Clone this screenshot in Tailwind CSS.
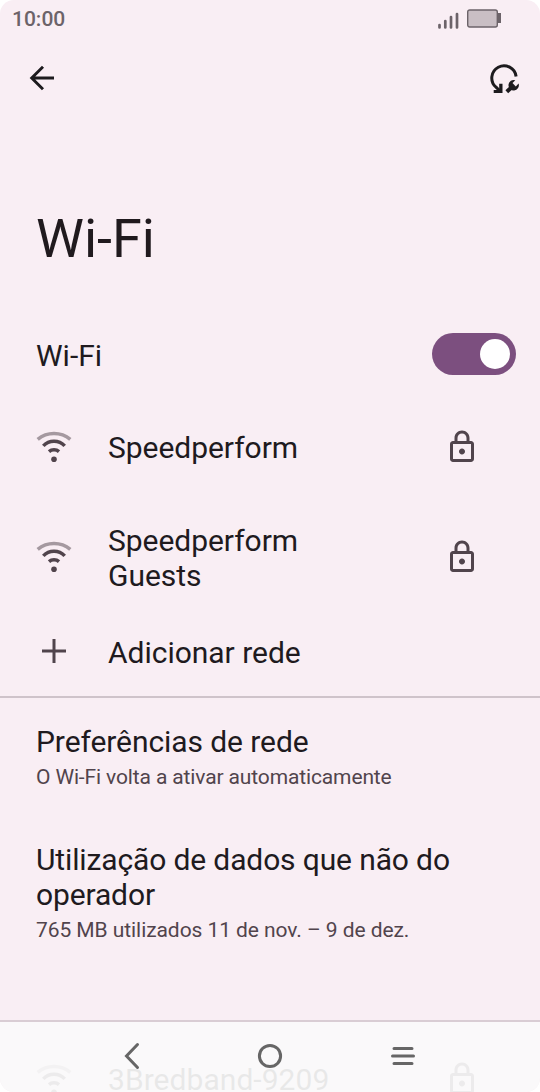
<!DOCTYPE html>
<html lang="pt">
<head>
<meta charset="utf-8">
<title>Wi-Fi</title>
<script src="https://cdn.jsdelivr.net/npm/@tailwindcss/browser@4"></script>
</head>
<body class="bg-white">
<svg class="hidden">
  <symbol id="wifi" viewBox="0 0 36 36">
    <g fill="none" stroke="currentColor" stroke-width="3.500">
      <path d="M1.700 10.400A25.500 25.500 0 0 1 34.300 10.400" opacity=".5"/>
      <path d="M7.300 16.900A14.500 14.500 0 0 1 28.700 16.900"/>
      <path d="M13 22.600A7.500 7.500 0 0 1 23 22.600"/>
    </g>
    <circle cx="18" cy="30.200" r="2.800" fill="currentColor"/>
  </symbol>
  <symbol id="lock" viewBox="0 0 24 24">
    <path fill="currentColor" d="M18 8h-1V6c0-2.76-2.24-5-5-5S7 3.240 7 6v2H6c-1.100 0-2 .9-2 2v10c0 1.100.9 2 2 2h12c1.100 0 2-.9 2-2V10c0-1.100-.9-2-2-2zM9 6c0-1.660 1.340-3 3-3s3 1.340 3 3v2H9V6zm9 14H6V10h12v10zm-6-3c1.100 0 2-.9 2-2s-.9-2-2-2-2 .9-2 2 .9 2 2 2z"/>
  </symbol>
</svg>
<div class="relative w-[540px] h-[1092px] overflow-hidden rounded-[14px] bg-[#f9eef4] font-['Roboto','Noto_Sans',sans-serif] text-[#201a1e] text-[30px] leading-[35px]">
  <header class="flex h-[38px] items-start justify-between pl-3 pr-[38px]">
    <span class="mt-[7px] text-[21px] leading-[25px] font-medium text-[#6c6369]">10:00</span>
    <div class="flex">
      <svg class="mt-[11px] w-[22px] h-5 mr-[7px]" viewBox="0 0 22 20" fill="none" stroke="#6c6369" stroke-width="2.700" stroke-linecap="round"><path d="M1.500 14v2.500M7.300 10v6.500M13 6v10.500M19 3v13.500"/></svg>
      <svg class="mt-[9px] w-[35px] h-5" viewBox="0 0 35 20"><rect x=".7" y="1" width="29.600" height="17" rx="2" fill="#c9bec4" stroke="#6c6369" stroke-width="1.400"/><path d="M30.500 4H34v10h-3.500z" fill="#6c6369"/></svg>
    </div>
  </header>
  <nav class="flex h-20 items-center justify-between pl-6 pr-[18px]">
    <svg class="w-9 h-9" viewBox="0 0 36 36" fill="none" stroke="#1d1b1e" stroke-width="2.900"><path d="M30 18H8M19 6.700 7.700 18 19 29.300"/></svg>
    <svg class="w-9 h-9" viewBox="0 0 36 36"><path d="M14 31 10 27.200A12.200 12.200 0 1 1 30.100 16.500" fill="none" stroke="#1d1b1e" stroke-width="3"/><path d="M7.700 33h8.800V23.700H13.200V29.900H7.700z" fill="#1d1b1e"/><path d="m20.800 31.800 6-5.800" stroke="#1d1b1e" stroke-width="4"/><path d="M29.300 20.300a5.200 5.200 0 1 0 3.300 3.300L29.800 26.400 26.500 23.100z" fill="#1d1b1e"/></svg>
  </nav>
  <h1 class="mt-[89px] px-9 text-[54px] leading-[63px]">Wi-Fi</h1>
  <section class="mt-[54px] flex h-[60px] items-center justify-between pl-9 pr-6">
    <span class="mt-[3px]">Wi-Fi</span>
    <span class="flex h-[42px] w-[84px] items-center justify-end rounded-full bg-[#7c4f7f] pr-[6px]"><span class="h-[30px] w-[30px] rounded-full bg-white"></span></span>
  </section>
  <ul>
    <li class="mt-[8px] flex h-[110px] items-center pl-9 pr-[60px]">
      <svg class="h-9 w-9 text-[#51444c]"><use href="#wifi"/></svg><span class="ml-9 flex-1 tracking-[-0.04px]">Speedperform</span><svg class="h-9 w-9 text-[#51444c]"><use href="#lock"/></svg>
    </li>
    <li class="flex h-[110px] items-center pl-9 pr-[60px]">
      <svg class="h-9 w-9 text-[#51444c]"><use href="#wifi"/></svg><span class="ml-9 mt-px flex-1 tracking-[-0.04px]">Speedperform<br>Guests</span><svg class="h-9 w-9 text-[#51444c]"><use href="#lock"/></svg>
    </li>
    <li class="flex h-[86px] items-start border-b-2 border-[#cfc3ca] pl-9">
      <svg class="mt-[21px] h-9 w-9" viewBox="0 0 36 36" stroke="#51444c" stroke-width="3"><path d="M6 18H30M18 6V30"/></svg><span class="ml-9 mt-[23px] tracking-[-0.02px]">Adicionar rede</span>
    </li>
  </ul>
  <section class="mt-[26px] px-9">
    <h2 class="tracking-[-0.08px]">Preferências de rede</h2>
    <p class="mt-[6px] text-[21px] leading-[25px] tracking-[-0.13px] text-[#51444c]">O Wi-Fi volta a ativar automaticamente</p>
  </section>
  <section class="mt-[52px] px-9">
    <h2 class="tracking-[-0.13px]">Utilização de dados que não do<br>operador</h2>
    <p class="mt-[6px] text-[21px] leading-[25px] tracking-[-0.07px] text-[#51444c]">765 MB utilizados 11 de nov. – 9 de dez.</p>
  </section>
  <div class="mt-[77px] flex h-[72px] items-start border-t-2 border-[#d9cdd4] pl-9 pr-[60px]">
    <svg class="mt-10 h-9 w-9 shrink-0 text-[#51444c]"><use href="#wifi"/></svg><span class="ml-9 mt-10 flex-1 tracking-[0.05px]">3Bredband-9209</span><svg class="mt-[39px] h-9 w-9 shrink-0 text-[#51444c]"><use href="#lock"/></svg>
  </div>
  <footer class="absolute inset-x-0 bottom-0 flex h-[70px] items-center justify-between bg-[#fafafa]/92 pb-[2px] pl-[114px] pr-[119px]">
    <svg class="h-9 w-9" viewBox="0 0 36 36" fill="none" stroke="#666" stroke-width="3" stroke-linecap="round"><path d="M23.500 6.500 12.500 18l11 11.500"/></svg>
    <svg class="ml-[5px] h-9 w-9" viewBox="0 0 36 36" fill="none" stroke="#666" stroke-width="3"><circle cx="18" cy="18" r="10.600"/></svg>
    <svg class="h-9 w-9" viewBox="0 0 36 36" fill="none" stroke="#666" stroke-width="3" stroke-linecap="round"><path d="M9 10.500H27M7.500 18H28.500M9 25.500H27"/></svg>
  </footer>
</div>
</body>
</html>
